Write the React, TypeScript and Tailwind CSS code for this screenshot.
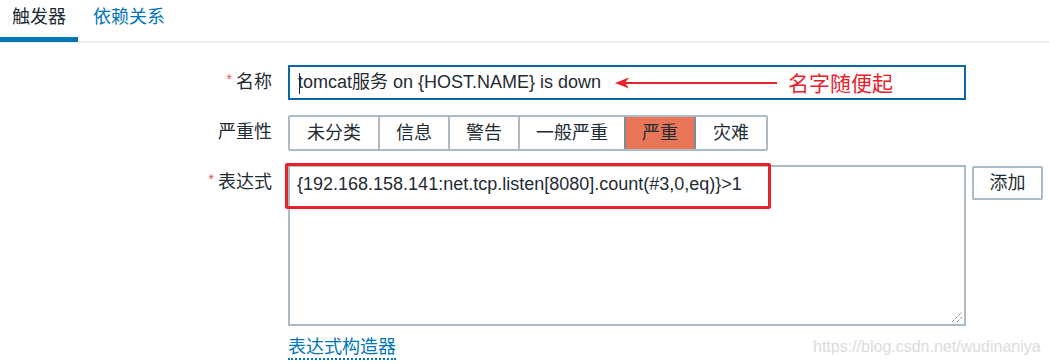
import React from "react";

const font = { fontFamily: '"Liberation Sans", Arial, "Noto Sans CJK SC", sans-serif' };

function Label({ text, required }: { text: string; required?: boolean }) {
  return (
    <div className="flex h-[35px] items-center justify-end pr-0 text-[18px] text-[#1f2c33]">
      {required && <span className="mr-[4px] text-[14px] text-[#e45959] -translate-y-[3px]">*</span>}
      <span>{text}</span>
    </div>
  );
}

const severities = ["未分类", "信息", "警告", "一般严重", "严重", "灾难"];

export default function App() {
  return (
    <div className="relative h-[364px] w-[1049px] overflow-hidden bg-white" style={font}>
      {/* Tabs */}
      <div className="flex h-[43px] items-stretch border-b-2 border-[#ebeef0]">
        <div className="relative flex w-[78px] items-center justify-center pb-[6px] text-[18px] text-[#1f2c33]">
          触发器
          <div className="absolute bottom-[-1px] left-0 h-[5px] w-full bg-[#0275b8]" />
        </div>
        <div className="flex items-center pb-[6px] pl-[15px] text-[18px] text-[#0275b8]">依赖关系</div>
      </div>

      {/* Form */}
      <div className="grid grid-cols-[272px_678px_77px] gap-x-[16px] pt-[22px]">
        {/* name */}
        <Label text="名称" required />
        <div className="relative flex h-[35px] items-center border-2 border-[#0b66a2] pl-[8px] text-[18px] text-[#1f2c33]">
          <span className="absolute left-[9px] top-[6px] h-[21px] w-[1px] bg-[#1f2c33]" />
          <span>tomcat服务 on {"{HOST.NAME}"} is down</span>
          {/* annotation arrow */}
          <div className="absolute left-[325px] top-[9px] flex items-center">
            <svg width="164" height="14" viewBox="0 0 164 14">
              <line x1="8" y1="7" x2="162" y2="7" stroke="#e8222b" strokeWidth="2.2" />
              <path d="M0 7 L14 1.5 L10 7 L14 12.5 Z" fill="#e8222b" />
            </svg>
          </div>
          <span className="absolute left-[498px] top-[1px] text-[21px] text-[#e8222b]">名字随便起</span>
        </div>
        <div />

        {/* severity */}
        <div className="mt-[15px]">
          <Label text="严重性" />
        </div>
        <div className="mt-[15px] flex">
          <div className="flex h-[36px] overflow-hidden rounded-[2px] border-2 border-[#acbbc6]">
            {severities.map((s, i) => (
              <div
                key={s}
                className={
                  s === "严重"
                    ? "flex items-center border-2 border-[#7f8c96] bg-[#e97659] px-[16px] text-[18px] text-[#1f2c33] -my-[2px]"
                    : "flex items-center text-[18px] text-[#1f2c33] " +
                      (i === 0 || s === "灾难" ? "px-[17px] " : "px-[16px] ") +
                      (i > 0 && severities[i - 1] !== "严重" ? "border-l-2 border-[#acbbc6]" : "")
                }
              >
                {s}
              </div>
            ))}
          </div>
        </div>
        <div />

        {/* expression */}
        <div className="mt-[14px]">
          <Label text="表达式" required />
        </div>
        <div className="relative mt-[14px] h-[161px] border-2 border-[#acbbc6]">
          <div className="pl-[7px] pt-[5px] text-[18px] leading-[24px] text-[#1f2c33]">
            {"{192.168.158.141:net.tcp.listen[8080].count(#3,0,eq)}>1"}
          </div>
          <div className="absolute left-[-5px] top-[-4px] h-[46px] w-[486px] rounded-[2px] border-[3px] border-[#e8222b]" />
          <svg className="absolute bottom-[1px] right-[1px]" width="12" height="12" viewBox="0 0 12 12">
            <line x1="1" y1="11" x2="11" y2="1" stroke="#555" strokeWidth="1" strokeDasharray="1 1" />
            <line x1="6" y1="11" x2="11" y2="6" stroke="#555" strokeWidth="1" strokeDasharray="1 1" />
          </svg>
        </div>
        <div className="mt-[15px] ml-[-10px]">
          <div className="flex h-[34px] w-[71px] items-center justify-center rounded-[2px] border-2 border-[#acbbc6] text-[18px] text-[#1f2c33]">
            添加
          </div>
        </div>

        {/* builder link */}
        <div />
        <div className="mt-[10px] flex items-start justify-between">
          <span className="border-b-2 border-dotted border-[#0275b8] text-[18px] leading-[22px] text-[#0275b8]">
            表达式构造器
          </span>
        </div>
        <div />
      </div>

      <div className="absolute left-[813px] top-[335px] whitespace-nowrap text-[16px] text-[#dcdcdc]">
        https://blog.csdn.net/wudinaniya
      </div>
    </div>
  );
}
